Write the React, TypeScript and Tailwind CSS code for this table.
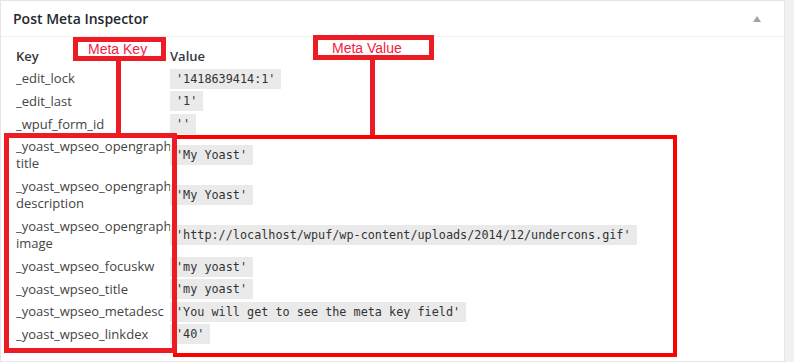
import React from "react";

type Row = { key: string[]; value: string };

const rows: Row[] = [
  { key: ["_edit_lock"], value: "'1418639414:1'" },
  { key: ["_edit_last"], value: "'1'" },
  { key: ["_wpuf_form_id"], value: "''" },
  { key: ["_yoast_wpseo_opengraph-", "title"], value: "'My Yoast'" },
  { key: ["_yoast_wpseo_opengraph-", "description"], value: "'My Yoast'" },
  { key: ["_yoast_wpseo_opengraph-", "image"], value: "'http://localhost/wpuf/wp-content/uploads/2014/12/undercons.gif'" },
  { key: ["_yoast_wpseo_focuskw"], value: "'my yoast'" },
  { key: ["_yoast_wpseo_title"], value: "'my yoast'" },
  { key: ["_yoast_wpseo_metadesc"], value: "'You will get to see the meta key field'" },
  { key: ["_yoast_wpseo_linkdex"], value: "'40'" },
];

export default function App() {
  return (
    <div className="relative w-[794px] h-[362px] bg-[#f1f1f1] overflow-hidden font-['Open_Sans',sans-serif]">
      <div className="w-[785px] h-[362px] border border-[#e5e5e5] bg-white">
        <div className="flex items-center justify-between h-[36px] border-b border-[#eee] pl-[12px] pr-[23px]">
          <h2 className="text-[14px] font-semibold text-[#23282d]">Post Meta Inspector</h2>
          <svg width="8" height="6" viewBox="0 0 8 6">
            <polygon points="4,0 8,6 0,6" fill="#9ea3a8" />
          </svg>
        </div>
        <div className="pt-[8px] pl-[15px] text-[13px] text-[#444]">
          <div className="grid grid-cols-[154px_1fr] h-[22.6px] items-center font-semibold text-[#32373c]">
            <div>Key</div>
            <div>Value</div>
          </div>
          {rows.map((r, i) => (
            <div
              key={i}
              className={`grid grid-cols-[154px_1fr] items-center ${r.key.length > 1 ? "h-[40px]" : "h-[22.6px]"}`}
            >
              <div className="leading-[17px] whitespace-nowrap">
                {r.key.map((line, j) => (
                  <div key={j}>{line}</div>
                ))}
              </div>
              <div>
                <code className="inline-block h-[20px] leading-[20px] px-[6px] bg-[#eaeaea] text-[#333] text-[11.8px] font-['DejaVu_Sans_Mono',monospace] whitespace-pre">
                  {r.value}
                </code>
              </div>
            </div>
          ))}
        </div>
      </div>

      {/* annotations */}
      <div className="absolute left-[73px] top-[37px] w-[93px] h-[24px] border-[5px] border-[#ed1c24] bg-white flex items-center pl-[10px]">
        <span className="text-[14px] leading-none text-[#f5203c] font-['Liberation_Sans',sans-serif]">Meta Key</span>
      </div>
      <div className="absolute left-[116px] top-[61px] w-[5px] h-[73px] bg-[#ed1c24]" />

      <div className="absolute left-[313px] top-[35px] w-[121px] h-[25px] border-[5px] border-[#ed1c24] bg-white flex items-center pl-[14px]">
        <span className="text-[14px] leading-none text-[#f5203c] font-['Liberation_Sans',sans-serif]">Meta Value</span>
      </div>
      <div className="absolute left-[370px] top-[60px] w-[5px] h-[77px] bg-[#ed1c24]" />

      <div className="absolute left-[173px] top-[135px] w-[504px] h-[222px] border-4 border-[#ff0000]" />
      <div className="absolute left-[4px] top-[133px] w-[173px] h-[220px] border-[5px] border-[#ed1c24]" />
    </div>
  );
}
